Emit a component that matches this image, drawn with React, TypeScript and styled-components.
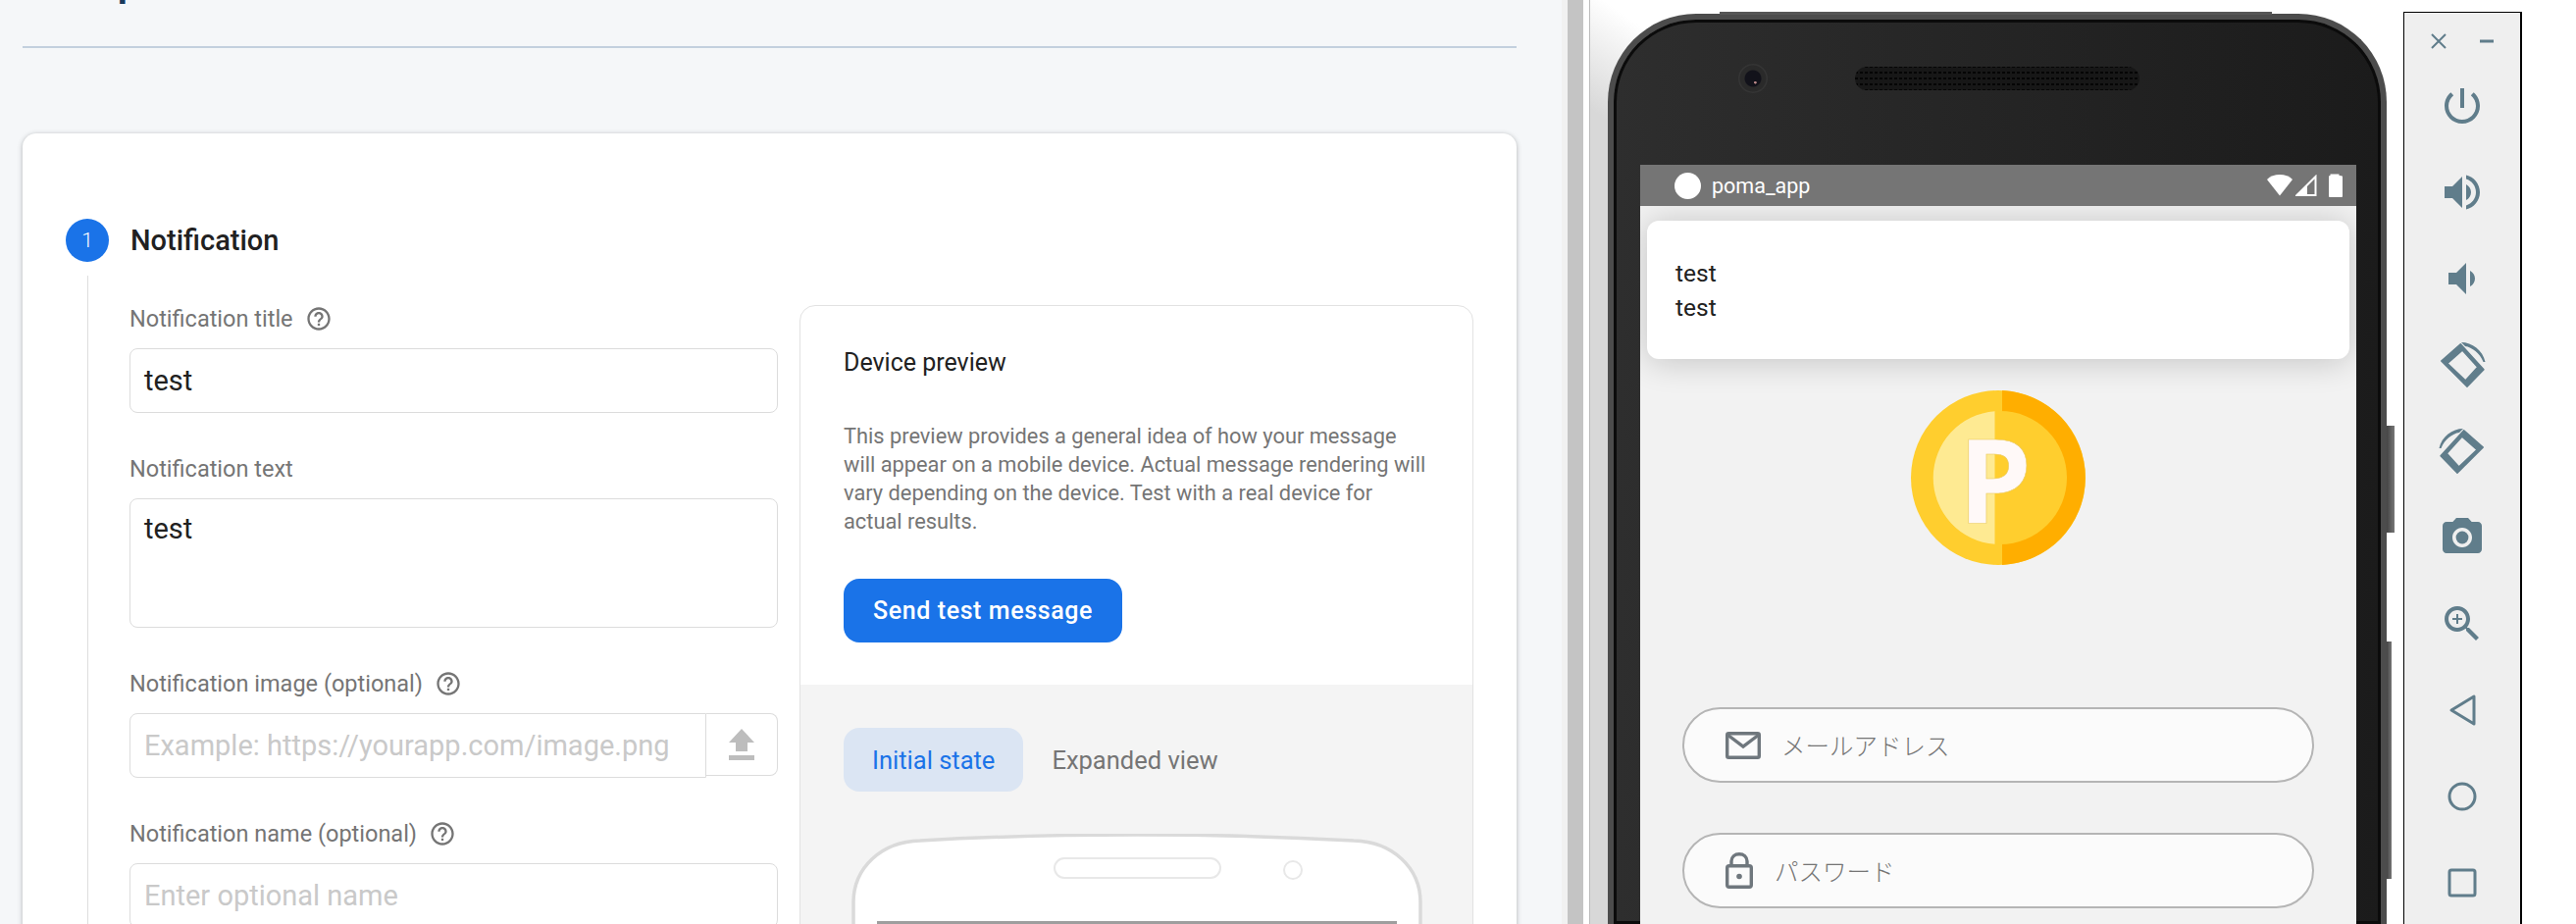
import React from "react";
import styled, { createGlobalStyle } from "styled-components";

const Global = createGlobalStyle`
  html, body { margin: 0; padding: 0; background: #fff; }
  body { width: 2626px; height: 942px; overflow: hidden; font-family: Roboto, "Liberation Sans", sans-serif; }
  * { box-sizing: border-box; }
`;

const Page = styled.div`
  display: flex;
  width: 2626px;
  height: 942px;
  overflow: hidden;
`;

/* ---------- left: console ---------- */
const Console = styled.div`
  width: 1598px;
  flex: none;
  height: 942px;
  overflow: hidden;
  background: #f5f7f9;
  border-right: 6px solid #f1f1f1;
  padding: 0 46px 0 23px;
`;
const PageTitle = styled.h1`
  margin: -44px 0 0;
  font-size: 46px;
  line-height: 46px;
  font-weight: 500;
  color: #1a3a5c;
  white-space: nowrap;
`;
const Rule = styled.hr`
  margin: 45px 0 0;
  border: 0;
  height: 2px;
  background: #c3d0de;
`;
const Card = styled.section`
  margin-top: 87px;
  background: #fff;
  border-radius: 14px 14px 0 0;
  box-shadow: 0 1px 5px rgba(60, 64, 67, 0.38);
  padding: 87px 44px 0;
  height: 900px;
`;
const StepHead = styled.div`
  display: flex;
  align-items: center;
  gap: 22px;
`;
const StepBadge = styled.div`
  width: 44px;
  height: 44px;
  border-radius: 50%;
  background: #1a73e8;
  color: #fff;
  font-size: 21px;
  font-weight: 300;
  display: flex;
  align-items: center;
  justify-content: center;
`;
const StepTitle = styled.div`
  font-size: 29px;
  font-weight: 500;
  color: #212121;
`;
const StepBody = styled.div`
  margin: 14px 0 0 22px;
  border-left: 1px solid #dedede;
  padding: 30px 0 0 42px;
  display: flex;
  gap: 22px;
  height: 700px;
`;
const Form = styled.div`
  width: 661px;
  flex: none;
  display: flex;
  flex-direction: column;
  gap: 43px;
`;
const Field = styled.div`
  display: flex;
  flex-direction: column;
  gap: 16px;
`;
const LabelRow = styled.div`
  display: flex;
  align-items: center;
  gap: 12px;
  height: 28px;
  font-size: 23.5px;
  color: #757575;
`;
const Box = styled.div<{ $tall?: boolean; $muted?: boolean }>`
  height: ${(p) => (p.$tall ? "132px" : "66px")};
  border: 1px solid #dcdcdc;
  border-radius: 8px;
  padding: ${(p) => (p.$tall ? "12px" : "0")} 14px 0;
  display: flex;
  align-items: ${(p) => (p.$tall ? "flex-start" : "center")};
  font-size: 29px;
  line-height: 36px;
  color: ${(p) => (p.$muted ? "#c9c9c9" : "#212121")};
  white-space: nowrap;
`;
const Attach = styled.div`
  display: flex;
`;
const AttachInput = styled(Box)`
  width: 588px;
  border-radius: 8px 0 0 8px;
  flex: none;
`;
const AttachButton = styled.div`
  flex: 1;
  height: 64px;
  border: 1px solid #dcdcdc;
  border-left: 0;
  border-radius: 0 8px 8px 0;
  display: flex;
  align-items: center;
  justify-content: center;
`;
const Preview = styled.aside`
  flex: 1;
  border: 1px solid #e2e2e2;
  border-radius: 16px 16px 0 0;
  overflow: hidden;
  display: flex;
  flex-direction: column;
`;
const PreviewTop = styled.div`
  padding: 43px 42px 43px 44px;
`;
const PreviewTitle = styled.div`
  font-size: 25px;
  line-height: 30px;
  color: #212121;
`;
const PreviewText = styled.p`
  margin: 45px 0 44px;
  font-size: 21.8px;
  line-height: 29px;
  color: #757575;
`;
const SendButton = styled.button`
  display: block;
  width: 284px;
  height: 65px;
  border: 0;
  border-radius: 16px;
  background: #1a73e8;
  color: #fff;
  font: 500 25px Roboto, sans-serif;
  letter-spacing: 0.6px;
`;
const PreviewBottom = styled.div`
  flex: 1;
  background: #f4f4f4;
  padding: 44px 50px 0 44px;
`;
const Tabs = styled.div`
  display: flex;
  align-items: center;
  margin-bottom: 43px;
`;
const Tab = styled.div<{ $active?: boolean }>`
  height: 65px;
  padding: 0 29px;
  border-radius: 16px;
  display: flex;
  align-items: center;
  font-size: 25.5px;
  color: ${(p) => (p.$active ? "#1a73e8" : "#757575")};
  background: ${(p) => (p.$active ? "#dbe5f3" : "transparent")};
`;
const OutlineSvg = styled.svg`
  display: block;
  margin-left: 8px;
`;

/* ---------- right: emulator ---------- */
const Gutter = styled.div`
  width: 16px;
  flex: none;
  background: #c4c4c4;
`;
const Emulator = styled.div`
  flex: 1;
  display: flex;
  align-items: flex-start;
  padding: 12px 0 0 25px;
  background:
    linear-gradient(90deg, #fff 6px, #b4b4b4 6px, #c4c4c4 7px, transparent 7px),
    linear-gradient(215deg, #fff 25%, #d8d8d8 75%) 6px 0 / 100px 170px no-repeat,
    linear-gradient(#d8d8d8, #d8d8d8) 6px 170px / 19px 100% no-repeat,
    #fff;
`;
const PhoneWrap = styled.div`
  position: relative;
  width: 794px;
  height: 930px;
  flex: none;
  padding-top: 2px;
`;
const SideKey = styled.div<{ $top: number; $h: number; $w: number }>`
  position: absolute;
  left: 100%;
  top: ${(p) => p.$top}px;
  width: ${(p) => p.$w}px;
  height: ${(p) => p.$h}px;
  background: linear-gradient(90deg, #444, #777);
`;
const TopRim = styled.div`
  position: absolute;
  top: 0;
  left: 114px;
  right: 117px;
  height: 3px;
  background: #565656;
`;
const Phone = styled.div`
  width: 100%;
  height: 100%;
  border: 6px solid #4c4c4c;
  border-bottom: 0;
  border-radius: 90px 90px 0 0;
  background: linear-gradient(90deg, #2e2e2e, #1b1b1b);
  box-shadow: inset 0 0 0 3px #0b0b0b;
  padding: 0 25px 0 27px;
  display: flex;
  flex-direction: column;
`;
const PhoneHead = styled.div`
  height: 24px;
  margin: 48px 0 76px;
  padding-left: 100px;
  display: flex;
  align-items: center;
  gap: 89px;
`;
const Camera = styled.div`
  width: 30px;
  height: 30px;
  flex: none;
  border-radius: 50%;
  background:
    radial-gradient(circle at 58% 64%, #b88 0 1px, transparent 1.6px),
    radial-gradient(circle, #12121a 0 8px, #2a2a2a 9px 13px, #353535 14px 15px);
`;
const Speaker = styled.div`
  width: 290px;
  height: 24px;
  flex: none;
  border-radius: 12px;
  background-color: #171717;
  background-image: radial-gradient(circle, #050505 1.2px, transparent 1.4px);
  background-size: 5px 6px;
  background-position: 4px 3px;
`;
const Screen = styled.div`
  flex: 1;
  background: #f2f2f2;
  overflow: hidden;
  display: flex;
  flex-direction: column;
`;
const StatusBar = styled.div`
  height: 42px;
  flex: none;
  background: #757575;
  display: flex;
  align-items: center;
  padding: 0 14px 0 35px;
  color: #fff;
  font-size: 21.5px;
  position: relative;
  z-index: 1;
`;
const AppDot = styled.div`
  width: 27px;
  height: 27px;
  border-radius: 50%;
  background: #fff;
  margin-right: 11px;
`;
const StatusIcons = styled.div`
  margin-left: auto;
  display: flex;
  align-items: center;
  & > svg:first-child {
    margin-right: 3px;
  }
`;
const Heads = styled.div`
  margin: 15px 7px 0;
  height: 141px;
  flex: none;
  padding: 36px 29px 0;
  border-radius: 12px;
  background: #fff;
  box-shadow: 0 2px 34px rgba(0, 0, 0, 0.2);
  color: #212121;
  font-size: 24.5px;
  line-height: 35px;
`;
const Coin = styled.svg`
  display: block;
  flex: none;
  margin: 32px auto 145px;
`;
const CoinLetter = styled.text`
  font-family: "Open Sans", sans-serif;
  font-weight: 700;
  font-size: 120px;
  fill: #fff9f8;
  stroke: #e9c95f;
  stroke-width: 0.6px;
`;
const LoginInput = styled.div<{ $gap: number }>`
  width: 644px;
  height: 77px;
  flex: none;
  margin: 0 auto 51px;
  border: 2px solid #b5b5b5;
  border-radius: 39px;
  background: #fbfbfb;
  display: flex;
  align-items: center;
  gap: ${(p) => p.$gap}px;
  padding-left: 42px;
  color: #757575;
  font-family: "Noto Sans CJK JP", sans-serif;
  font-weight: 300;
  font-size: 24.5px;
`;

const Toolbar = styled.div`
  margin-left: 17px;
  width: 121px;
  height: 930px;
  flex: none;
  background: #efefef;
  border: solid #000;
  border-width: 1px 2px 0 1px;
  display: flex;
  flex-direction: column;
  align-items: center;
  gap: 40px;
`;
const WindowRow = styled.div`
  width: 100%;
  height: 71px;
  margin-bottom: -40px;
  flex: none;
  padding: 21px 26px 0 27px;
  display: flex;
  justify-content: space-between;
`;
const ToolIcon = styled.svg`
  width: 48px;
  height: 48px;
  flex: none;
  display: block;
  fill: #607d8b;
`;
const WinIcon = styled.svg`
  width: 16px;
  height: 16px;
  display: block;
  stroke: #607d8b;
  stroke-width: 2;
  fill: none;
`;

const Help = () => (
  <svg width="28" height="28" viewBox="0 0 24 24" fill="#757575">
    <path d="M11 18h2v-2h-2v2zm1-16C6.48 2 2 6.48 2 12s4.48 10 10 10 10-4.48 10-10S17.52 2 12 2zm0 18c-4.41 0-8-3.59-8-8s3.59-8 8-8 8 3.59 8 8-3.59 8-8 8zm0-14c-2.21 0-4 1.79-4 4h2c0-1.1.9-2 2-2s2 .9 2 2c0 2-3 1.75-3 5h2c0-2.25 3-2.5 3-5 0-2.21-1.79-4-4-4z" />
  </svg>
);

const Rotate = ({ flip }: { flip?: boolean }) => (
  <ToolIcon viewBox="0 0 48 48">
    <g transform={flip ? "translate(48 0) scale(-1 1)" : undefined}>
      <path
        fillRule="evenodd"
        stroke="#607d8b"
        strokeWidth="1.4"
        strokeLinejoin="round"
        d="M2.7 20 L22.3 2.7 L46 28.7 L29 46.3 Z M9 22.5 L27.24 39.88 L39.7 26.22 L24.06 9.12 Z"
      />
      <path d="M23 1 C 34 1 45 9 47.5 21 L45.5 21 C 42 12 34 6 27 5 Z" />
    </g>
  </ToolIcon>
);

export default function App() {
  return (
    <Page>
      <Global />
      <Console>
        <PageTitle>Compose notification</PageTitle>
        <Rule />
        <Card>
          <StepHead>
            <StepBadge>1</StepBadge>
            <StepTitle>Notification</StepTitle>
          </StepHead>
          <StepBody>
            <Form>
              <Field>
                <LabelRow>
                  Notification title <Help />
                </LabelRow>
                <Box>test</Box>
              </Field>
              <Field>
                <LabelRow>Notification text</LabelRow>
                <Box $tall>test</Box>
              </Field>
              <Field>
                <LabelRow>
                  Notification image (optional) <Help />
                </LabelRow>
                <Attach>
                  <AttachInput $muted>Example: https://yourapp.com/image.png</AttachInput>
                  <AttachButton>
                    <svg width="26" height="32" viewBox="0 0 26 32" fill="#bdbdbd">
                      <path d="M13 0 L26 14 H19 V23 H7 V14 H0 Z" />
                      <rect x="0" y="27" width="26" height="5" />
                    </svg>
                  </AttachButton>
                </Attach>
              </Field>
              <Field>
                <LabelRow>
                  Notification name (optional) <Help />
                </LabelRow>
                <Box $muted>Enter optional name</Box>
              </Field>
            </Form>
            <Preview>
              <PreviewTop>
                <PreviewTitle>Device preview</PreviewTitle>
                <PreviewText>
                  This preview provides a general idea of how your message will appear on a mobile device. Actual
                  message rendering will vary depending on the device. Test with a real device for actual results.
                </PreviewText>
                <SendButton>Send test message</SendButton>
              </PreviewTop>
              <PreviewBottom>
                <Tabs>
                  <Tab $active>Initial state</Tab>
                  <Tab>Expanded view</Tab>
                </Tabs>
                <OutlineSvg width="584" height="96" viewBox="0 0 584 96">
                  <path
                    d="M2 96 V70 C2 35 30 8 70 7 C140 3 220 1 291 1 C362 1 442 3 512 7 C552 8 580 35 580 70 V96 Z"
                    fill="#fff"
                    stroke="#dadada"
                    strokeWidth="3.5"
                  />
                  <rect x="207" y="25" width="169" height="20" rx="10" fill="#fff" stroke="#e8e8e8" strokeWidth="2" />
                  <ellipse cx="450" cy="37" rx="9" ry="9" fill="#fff" stroke="#e8e8e8" strokeWidth="2" />
                  <rect x="26" y="89" width="530" height="7" fill="#9e9e9e" />
                </OutlineSvg>
              </PreviewBottom>
            </Preview>
          </StepBody>
        </Card>
      </Console>
      <Gutter />
      <Emulator>
        <PhoneWrap>
          <TopRim />
          <SideKey $top={422} $h={109} $w={8} />
          <SideKey $top={642} $h={242} $w={5} />
          <Phone>
            <PhoneHead>
              <Camera />
              <Speaker />
            </PhoneHead>
            <Screen>
              <StatusBar>
                <AppDot />
                poma_app
                <StatusIcons>
                  <svg width="26" height="22" viewBox="0 0 26 22" fill="#fff">
                    <path d="M13 21.5 L0 5 C3 1.8 8 0 13 0 C18 0 23 1.8 26 5 Z" />
                  </svg>
                  <svg width="22" height="22" viewBox="0 0 22 22">
                    <path d="M20.5 2 V21 H1.5 Z" fill="none" stroke="#fff" strokeWidth="2" />
                    <path d="M12 11 V21 H2 Z" fill="#fff" />
                  </svg>
                  <svg width="26" height="24" viewBox="0 0 26 24" fill="#fff">
                    <path d="M12 3 C12 2 13 2 13.5 2 V0.5 H22.5 V2 C23 2 26 2 26 3 V23 C26 24 25 24 24 24 H14 C13 24 12 24 12 23 Z" />
                  </svg>
                </StatusIcons>
              </StatusBar>
              <Heads>
                test
                <br />
                test
              </Heads>
              <Coin width="178" height="178" viewBox="0 0 178 178">
                <circle cx="89" cy="89" r="89" fill="#ffce2e" />
                <path d="M93 0.1 A89 89 0 0 1 93 177.9 Z" fill="#ffae00" />
                <circle cx="91" cy="89" r="68" fill="#ffce2e" />
                <path d="M85.5 21.2 A68 68 0 0 0 85.5 156.8 Z" fill="#feea92" />
                <CoinLetter x="48" y="136">
                  P
                </CoinLetter>
              </Coin>
              <LoginInput $gap={21}>
                <svg width="36" height="28" viewBox="0 0 36 28" fill="none" stroke="#6f777d" strokeWidth="3.4">
                  <rect x="1.7" y="1.7" width="32.6" height="24.6" rx="1.5" />
                  <path d="M2 3 L18 15 L34 3" />
                </svg>
                メールアドレス
              </LoginInput>
              <LoginInput $gap={22}>
                <svg width="28" height="37" viewBox="0 0 28 37" fill="none" stroke="#6f777d" strokeWidth="3.4">
                  <rect x="1.7" y="13.7" width="24.6" height="21.6" rx="2" />
                  <path d="M6 13 V9 C6 4.5 9.5 1.7 14 1.7 C18.5 1.7 22 4.5 22 9 V13" />
                  <circle cx="14" cy="24.5" r="2.8" fill="#6f777d" stroke="none" />
                </svg>
                パスワード
              </LoginInput>
            </Screen>
          </Phone>
        </PhoneWrap>
        <Toolbar>
          <WindowRow>
            <WinIcon viewBox="0 0 16 16">
              <path d="M1 1 L15 15 M15 1 L1 15" />
            </WinIcon>
            <WinIcon viewBox="0 0 16 16">
              <path d="M1 8 H15" strokeWidth="3" />
            </WinIcon>
          </WindowRow>
          <ToolIcon viewBox="0 0 24 24">
            <path d="M13 3h-2v10h2V3zm4.83 2.17l-1.42 1.42C17.99 7.86 19 9.81 19 12c0 3.87-3.13 7-7 7s-7-3.13-7-7c0-2.19 1.01-4.14 2.58-5.42L6.17 5.17C4.23 6.82 3 9.26 3 12c0 4.97 4.03 9 9 9s9-4.03 9-9c0-2.74-1.23-5.18-3.17-6.83z" />
          </ToolIcon>
          <ToolIcon viewBox="0 0 24 24">
            <path d="M3 9v6h4l5 5V4L7 9H3zm13.5 3c0-1.77-1.02-3.29-2.5-4.03v8.05c1.48-.73 2.5-2.25 2.5-4.02zM14 3.23v2.06c2.89.86 5 3.54 5 6.71s-2.11 5.85-5 6.71v2.06c4.01-.91 7-4.49 7-8.77s-2.99-7.86-7-8.77z" />
          </ToolIcon>
          <ToolIcon viewBox="0 0 24 24">
            <path d="M18.5 12c0-1.77-1.02-3.29-2.5-4.03v8.05c1.48-.73 2.5-2.25 2.5-4.02zM5 9v6h4l5 5V4L9 9H5z" />
          </ToolIcon>
          <Rotate />
          <Rotate flip />
          <ToolIcon viewBox="0 0 24 24">
            <path
              fillRule="evenodd"
              d="M9 2L7.17 4H4c-1.1 0-2 .9-2 2v12c0 1.1.9 2 2 2h16c1.1 0 2-.9 2-2V6c0-1.1-.9-2-2-2h-3.17L15 2H9zm3 15c-2.76 0-5-2.24-5-5s2.24-5 5-5 5 2.24 5 5-2.24 5-5 5z"
            />
            <circle cx="12" cy="12" r="3.2" />
          </ToolIcon>
          <ToolIcon viewBox="0 0 24 24">
            <path d="M15.5 14h-.79l-.28-.27C15.41 12.59 16 11.11 16 9.5 16 5.91 13.09 3 9.5 3S3 5.91 3 9.5 5.91 16 9.5 16c1.61 0 3.09-.59 4.23-1.57l.27.28v.79l5 4.99L20.49 19l-4.99-5zm-6 0C7.01 14 5 11.99 5 9.5S7.01 5 9.5 5 14 7.01 14 9.5 11.99 14 9.5 14z" />
            <path d="M12 10h-2v2H9v-2H7V9h2V7h1v2h2v1z" />
          </ToolIcon>
          <ToolIcon viewBox="0 0 48 48">
            <path d="M36 10 V38 L13 24 Z" fill="none" stroke="#607d8b" strokeWidth="3" strokeLinejoin="round" />
          </ToolIcon>
          <ToolIcon viewBox="0 0 48 48">
            <circle cx="24" cy="24" r="13" fill="none" stroke="#607d8b" strokeWidth="3" />
          </ToolIcon>
          <ToolIcon viewBox="0 0 48 48">
            <rect x="11" y="11" width="26" height="26" rx="2" fill="none" stroke="#607d8b" strokeWidth="3" />
          </ToolIcon>
        </Toolbar>
      </Emulator>
    </Page>
  );
}
